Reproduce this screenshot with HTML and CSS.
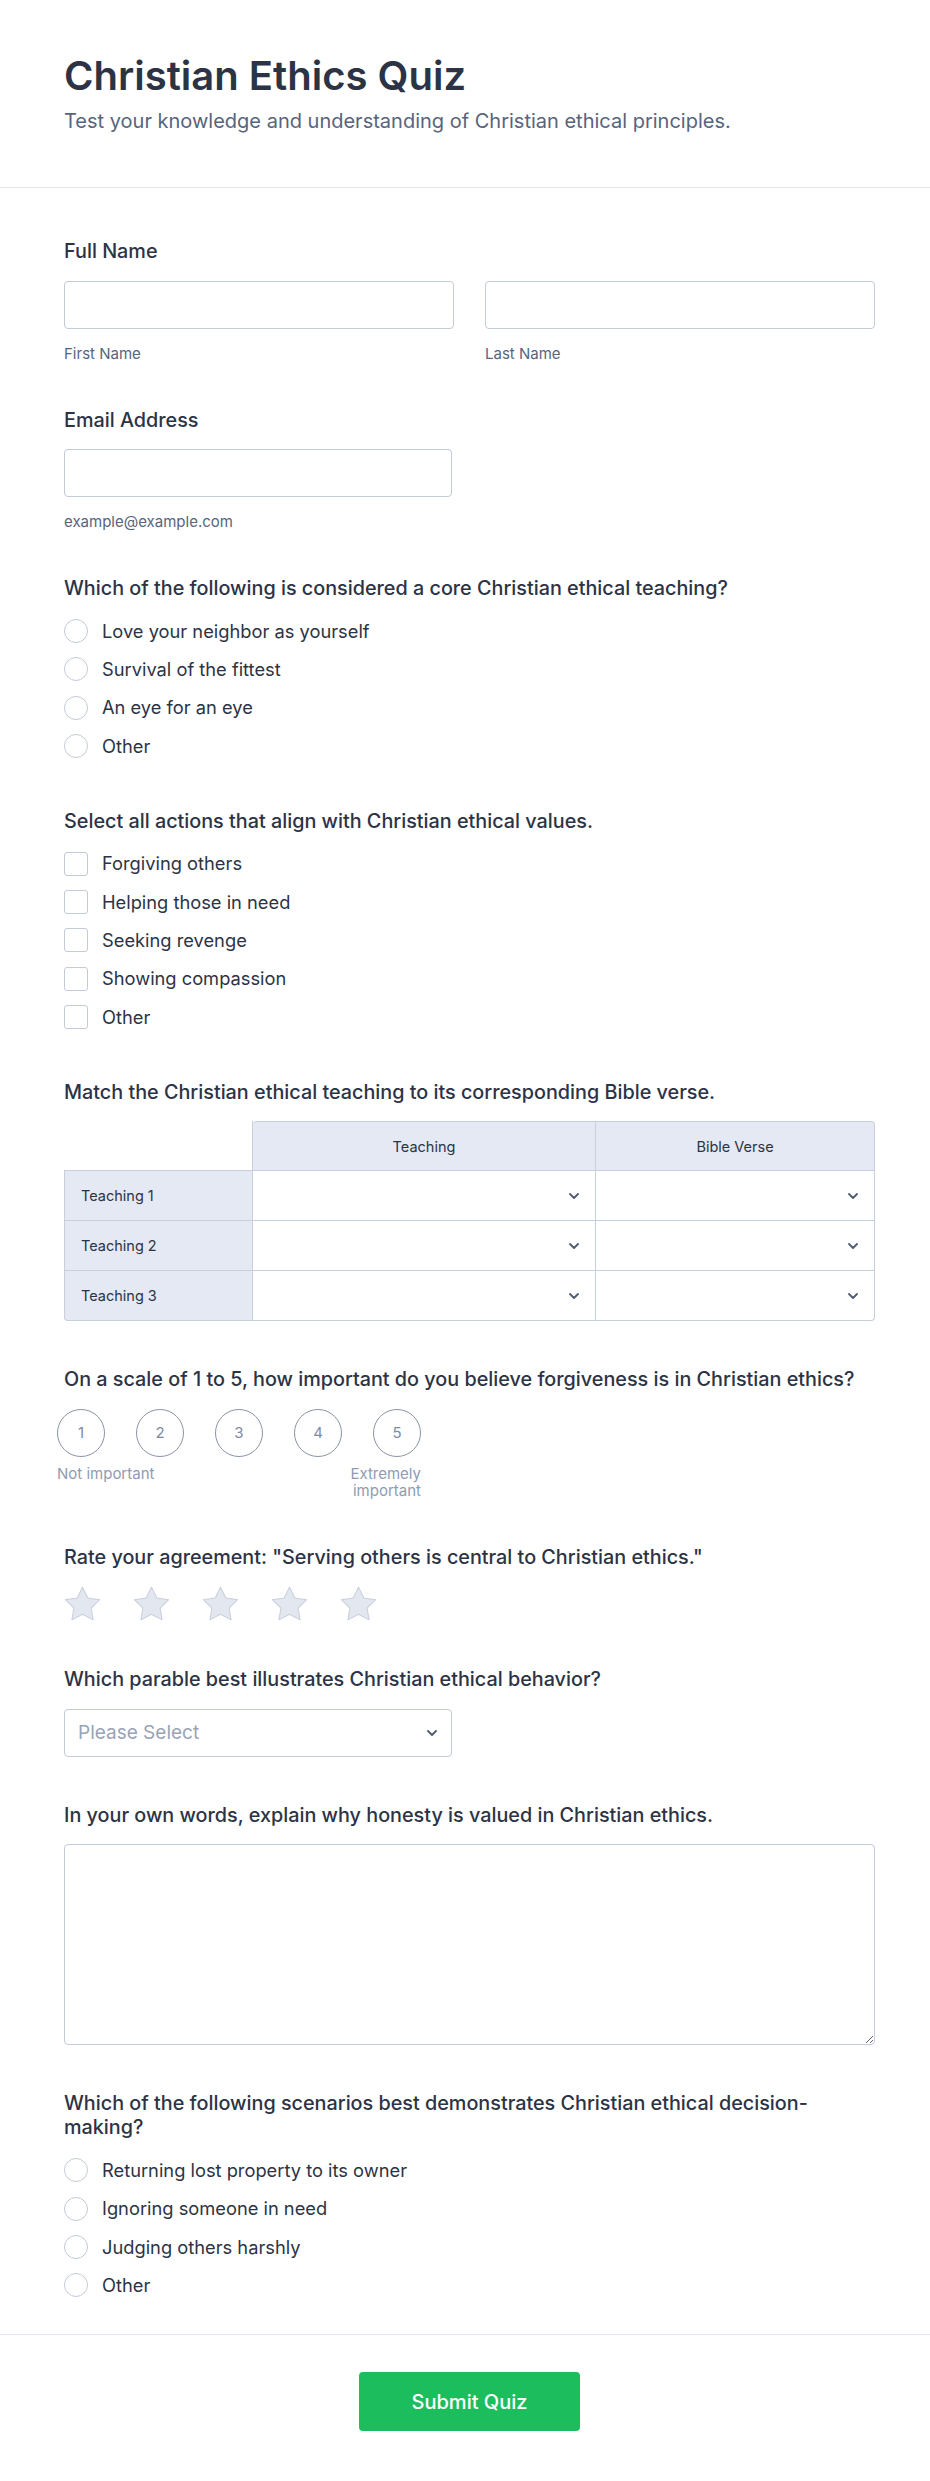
FILE: index.html
```html
<!DOCTYPE html>
<html lang="en">
<head>
<meta charset="utf-8">
<title>Christian Ethics Quiz</title>
<link rel="stylesheet" href="styles.css">
</head>
<body>
<header class="header">
  <h1 class="title">Christian Ethics Quiz</h1>
  <p class="subtitle">Test your knowledge and understanding of Christian ethical principles.</p>
</header>

<main class="form">
  <section class="field">
    <div class="label">Full Name</div>
    <div class="name-row">
      <div class="sub-field">
        <input class="text-input" type="text">
        <div class="sublabel">First Name</div>
      </div>
      <div class="sub-field">
        <input class="text-input" type="text">
        <div class="sublabel">Last Name</div>
      </div>
    </div>
  </section>

  <section class="field">
    <div class="label">Email Address</div>
    <input class="text-input half" type="email">
    <div class="sublabel">example@example.com</div>
  </section>

  <section class="field">
    <div class="label">Which of the following is considered a core Christian ethical teaching?</div>
    <div class="options">
      <label class="opt"><span class="radio"></span><span>Love your neighbor as yourself</span></label>
      <label class="opt"><span class="radio"></span><span>Survival of the fittest</span></label>
      <label class="opt"><span class="radio"></span><span>An eye for an eye</span></label>
      <label class="opt"><span class="radio"></span><span>Other</span></label>
    </div>
  </section>

  <section class="field">
    <div class="label">Select all actions that align with Christian ethical values.</div>
    <div class="options">
      <label class="opt"><span class="check"></span><span>Forgiving others</span></label>
      <label class="opt"><span class="check"></span><span>Helping those in need</span></label>
      <label class="opt"><span class="check"></span><span>Seeking revenge</span></label>
      <label class="opt"><span class="check"></span><span>Showing compassion</span></label>
      <label class="opt"><span class="check"></span><span>Other</span></label>
    </div>
  </section>

  <section class="field">
    <div class="label">Match the Christian ethical teaching to its corresponding Bible verse.</div>
    <table class="matrix">
      <thead>
        <tr>
          <th class="corner"></th>
          <th class="col-head first">Teaching</th>
          <th class="col-head last">Bible Verse</th>
        </tr>
      </thead>
      <tbody>
        <tr>
          <th class="row-head">Teaching 1</th>
          <td class="cell"><div class="cell-select"><svg class="chev" viewBox="0 0 10 6"><path d="M1 1l4 4 4-4"/></svg></div></td>
          <td class="cell"><div class="cell-select"><svg class="chev" viewBox="0 0 10 6"><path d="M1 1l4 4 4-4"/></svg></div></td>
        </tr>
        <tr>
          <th class="row-head">Teaching 2</th>
          <td class="cell"><div class="cell-select"><svg class="chev" viewBox="0 0 10 6"><path d="M1 1l4 4 4-4"/></svg></div></td>
          <td class="cell"><div class="cell-select"><svg class="chev" viewBox="0 0 10 6"><path d="M1 1l4 4 4-4"/></svg></div></td>
        </tr>
        <tr class="last-row">
          <th class="row-head">Teaching 3</th>
          <td class="cell"><div class="cell-select"><svg class="chev" viewBox="0 0 10 6"><path d="M1 1l4 4 4-4"/></svg></div></td>
          <td class="cell"><div class="cell-select"><svg class="chev" viewBox="0 0 10 6"><path d="M1 1l4 4 4-4"/></svg></div></td>
        </tr>
      </tbody>
    </table>
  </section>

  <section class="field">
    <div class="label">On a scale of 1 to 5, how important do you believe forgiveness is in Christian ethics?</div>
    <div class="scale">
      <div class="scale-row">
        <span class="scale-dot">1</span>
        <span class="scale-dot">2</span>
        <span class="scale-dot">3</span>
        <span class="scale-dot">4</span>
        <span class="scale-dot">5</span>
      </div>
      <div class="scale-labels">
        <span>Not important</span>
        <span class="scale-right">Extremely important</span>
      </div>
    </div>
  </section>

  <section class="field">
    <div class="label">Rate your agreement: "Serving others is central to Christian ethics."</div>
    <div class="stars">
      <svg class="star" viewBox="1.3 1.3 21.4 20.4"><path d="M12 2l3.09 6.26L22 9.27l-5 4.87 1.18 6.88L12 17.77l-6.18 3.25L7 14.14 2 9.27l6.91-1.01L12 2z"/></svg>
      <svg class="star" viewBox="1.3 1.3 21.4 20.4"><path d="M12 2l3.09 6.26L22 9.27l-5 4.87 1.18 6.88L12 17.77l-6.18 3.25L7 14.14 2 9.27l6.91-1.01L12 2z"/></svg>
      <svg class="star" viewBox="1.3 1.3 21.4 20.4"><path d="M12 2l3.09 6.26L22 9.27l-5 4.87 1.18 6.88L12 17.77l-6.18 3.25L7 14.14 2 9.27l6.91-1.01L12 2z"/></svg>
      <svg class="star" viewBox="1.3 1.3 21.4 20.4"><path d="M12 2l3.09 6.26L22 9.27l-5 4.87 1.18 6.88L12 17.77l-6.18 3.25L7 14.14 2 9.27l6.91-1.01L12 2z"/></svg>
      <svg class="star" viewBox="1.3 1.3 21.4 20.4"><path d="M12 2l3.09 6.26L22 9.27l-5 4.87 1.18 6.88L12 17.77l-6.18 3.25L7 14.14 2 9.27l6.91-1.01L12 2z"/></svg>
    </div>
  </section>

  <section class="field">
    <div class="label">Which parable best illustrates Christian ethical behavior?</div>
    <div class="select half">
      <span class="placeholder">Please Select</span>
      <svg class="chev" viewBox="0 0 10 6"><path d="M1 1l4 4 4-4"/></svg>
    </div>
  </section>

  <section class="field">
    <div class="label">In your own words, explain why honesty is valued in Christian ethics.</div>
    <textarea class="textarea"></textarea>
  </section>

  <section class="field">
    <div class="label">Which of the following scenarios best demonstrates Christian ethical decision-making?</div>
    <div class="options">
      <label class="opt"><span class="radio"></span><span>Returning lost property to its owner</span></label>
      <label class="opt"><span class="radio"></span><span>Ignoring someone in need</span></label>
      <label class="opt"><span class="radio"></span><span>Judging others harshly</span></label>
      <label class="opt"><span class="radio"></span><span>Other</span></label>
    </div>
  </section>
</main>

<footer class="footer">
  <button class="submit" type="button">Submit Quiz</button>
</footer>
</body>
</html>
```

FILE: styles.css
```css
* { box-sizing: border-box; }

html, body {
  margin: 0;
  padding: 0;
  background: #ffffff;
}

body {
  font-family: Inter, "Noto Sans", "Liberation Sans", sans-serif;
  color: #2c3345;
}

.header {
  padding: 52px 55px 52px 64px;
  border-bottom: 1px solid #e3e6ee;
}

.title {
  margin: 0;
  font-size: 40px;
  line-height: 48px;
  font-weight: 600;
  color: #2c3345;
}

.subtitle {
  margin: 7px 0 0;
  font-size: 20px;
  line-height: 28px;
  color: #57647e;
}

.form {
  padding: 51px 55px 32.5px 64px;
  display: flex;
  flex-direction: column;
  gap: 46px;
}

.label {
  font-size: 19.8px;
  line-height: 24px;
  font-weight: 500;
  color: #2c3345;
  margin-bottom: 17.5px;
}

.name-row {
  display: grid;
  grid-template-columns: 1fr 1fr;
  column-gap: 31px;
}

.text-input {
  display: block;
  width: 100%;
  height: 48px;
  border: 1px solid #c3cad8;
  border-radius: 4px;
  background: #fff;
  font: inherit;
}

.half { width: 388px; }

.sublabel {
  margin-top: 16px;
  font-size: 15px;
  line-height: 17px;
  color: #57647e;
}

.options {
  display: flex;
  flex-direction: column;
  gap: 11.4px;
  padding-bottom: 3px;
}

.opt {
  display: flex;
  align-items: center;
  gap: 14px;
  height: 27px;
  font-size: 18.3px;
  line-height: 27px;
  color: #2c3345;
}

.radio {
  width: 24px;
  height: 24px;
  border: 1px solid #c3cad8;
  border-radius: 50%;
  flex: none;
}

.check {
  width: 24px;
  height: 24px;
  border: 1px solid #c3cad8;
  border-radius: 3px;
  flex: none;
}

/* matrix */
.matrix {
  border-collapse: separate;
  border-spacing: 0;
  width: 100%;
  table-layout: fixed;
  font-size: 14.5px;
  color: #2c3345;
}

.matrix th, .matrix td {
  padding: 0;
  height: 50px;
  border-right: 1px solid #c8cfdc;
  border-bottom: 1px solid #c8cfdc;
  font-weight: 400;
}

.matrix .corner {
  width: 189px;
  background: #fff;
}

.matrix .col-head {
  background: #e4e9f3;
  border-top: 1px solid #c8cfdc;
  text-align: center;
  width: 343px;
}

.matrix .col-head.first { border-top-left-radius: 4px; }
.matrix .col-head.last { border-top-right-radius: 4px; width: auto; }

.matrix .row-head {
  background: #e4e9f3;
  border-left: 1px solid #c8cfdc;
  text-align: left;
  padding-left: 16px;
}

.matrix .last-row .row-head { border-bottom-left-radius: 4px; }
.matrix .last-row .cell:last-child { border-bottom-right-radius: 4px; }

.cell-select {
  display: flex;
  justify-content: flex-end;
  align-items: center;
  height: 100%;
  padding-right: 16px;
}

.chev {
  width: 10px;
  height: 6px;
  fill: none;
  stroke: #4f5b70;
  stroke-width: 1.8;
  stroke-linecap: round;
  stroke-linejoin: round;
}

/* scale */
.scale {
  margin-left: -7px;
  width: 364px;
}

.scale-row {
  display: flex;
  gap: 31px;
}

.scale-dot {
  width: 48px;
  height: 48px;
  border: 1px solid #8a94a8;
  border-radius: 50%;
  display: flex;
  align-items: center;
  justify-content: center;
  font-size: 15px;
  color: #7e8ba3;
}

.scale-labels {
  display: flex;
  justify-content: space-between;
  align-items: flex-start;
  margin-top: 8px;
  font-size: 15px;
  line-height: 17px;
  color: #8f9bb3;
}

.scale-right {
  max-width: 80px;
  text-align: right;
}

/* stars */
.stars {
  display: flex;
  gap: 32px;
  margin-top: 3.5px;
}

.star {
  width: 37px;
  height: 35px;
  fill: #e3e7f0;
  stroke: #c8cedb;
  stroke-width: 0.6;
  stroke-linejoin: round;
}

/* select */
.select {
  height: 48px;
  border: 1px solid #c3cad8;
  border-radius: 4px;
  display: flex;
  align-items: center;
  justify-content: space-between;
  padding: 0 14px 0 13px;
}

.placeholder {
  font-size: 19px;
  color: #9aa3b5;
}

.textarea {
  display: block;
  width: 100%;
  height: 201px;
  border: 1px solid #c3cad8;
  border-radius: 4px;
  font: inherit;
  resize: vertical;
}

.footer {
  border-top: 1px solid #e3e6ee;
  padding: 37px 55px 50px 64px;
  display: flex;
  justify-content: center;
}

.submit {
  width: 221px;
  height: 59px;
  border: none;
  border-radius: 4px;
  background: #1cbd5d;
  color: #ffffff;
  font-family: Inter, "Noto Sans", sans-serif;
  font-size: 20px;
  font-weight: 500;
}
```
